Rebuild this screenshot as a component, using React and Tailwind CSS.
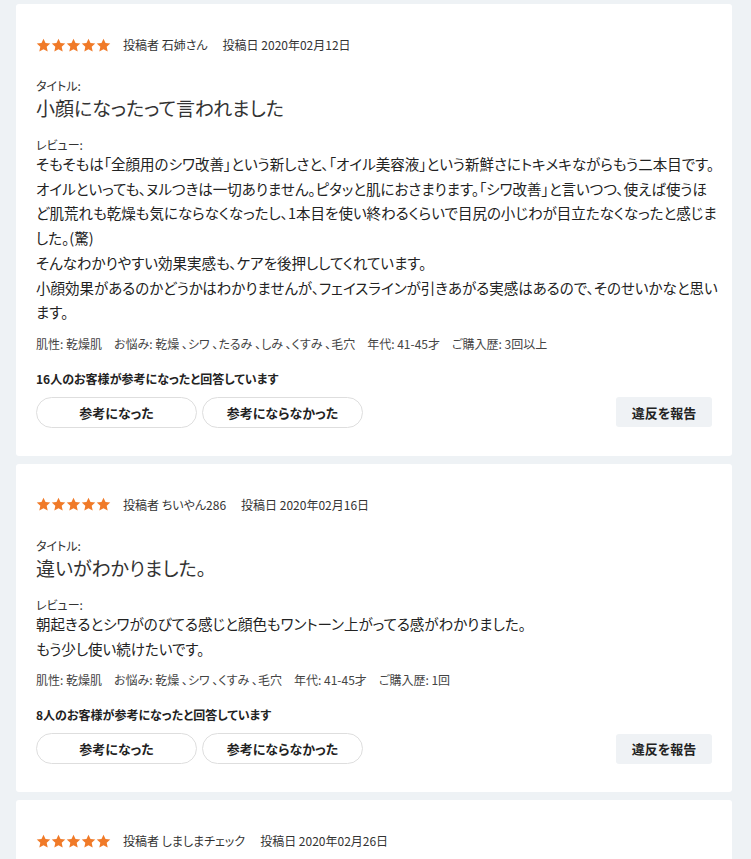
import React from "react";

const font = {
  fontFamily: '"Noto Sans CJK JP", "Noto Sans", sans-serif',
};

function Star() {
  return (
    <svg width="15" height="15" viewBox="0 0 24 24" className="block">
      <path
        d="M12 1l3.2 7.1 7.6.8-5.7 5.2 1.6 7.6L12 17.8l-6.7 3.9 1.6-7.6-5.7-5.2 7.6-.8z"
        fill="#f07a28"
      />
    </svg>
  );
}

function Stars() {
  return (
    <div className="flex">
      <Star />
      <Star />
      <Star />
      <Star />
      <Star />
    </div>
  );
}

function Review({ author, date, title, body, meta, helpful, last }) {
  return (
    <div className="bg-white rounded-[3px] px-5 pt-[28px] pb-7 shrink-0">
      <div className="flex items-center h-[26px]">
        <Stars />
        <span className="ml-[12px] text-[12px] text-[#333]">投稿者 {author}</span>
        <span className="ml-[15px] text-[12px] text-[#333]">投稿日 {date}</span>
      </div>
      {!last && (
        <>
          <div className="mt-[19px] text-[12px] leading-[18px] text-[#333]">タイトル:</div>
          <div className="mt-px text-[19px] leading-[24px] text-[#333]">{title}</div>
          <div className="mt-[16px] text-[12px] leading-[18px] text-[#333]">レビュー:</div>
          <div className="-mt-[2px] text-[14.5px] leading-[24.7px] text-[#222]">
            {body.map((l, i) => (
              <div key={i} className="whitespace-nowrap">{l}</div>
            ))}
          </div>
          <div className="mt-[9px] text-[12px] leading-[20px] text-[#444]">{meta}</div>
          <div className="mt-[15px] text-[12px] leading-[20px] font-bold text-[#222]">{helpful}</div>
          <div className="mt-[8px] flex items-center">
            <button className="w-[161px] h-[31px] rounded-full border border-[#dedede] bg-white text-[13px] font-bold text-[#222]">
              参考になった
            </button>
            <button className="ml-[5px] w-[161px] h-[31px] rounded-full border border-[#dedede] bg-white text-[13px] font-bold text-[#222]">
              参考にならなかった
            </button>
            <button className="ml-auto w-[96px] h-[30px] rounded-[3px] bg-[#eff2f5] text-[13px] font-bold text-[#222]">
              違反を報告
            </button>
          </div>
        </>
      )}
    </div>
  );
}

export default function App() {
  return (
    <div
      className="h-[859px] bg-[#eef2f5] pt-1 pl-4 pr-[19px] flex flex-col gap-[8px] [font-feature-settings:'palt'] overflow-hidden"
      style={font}
    >
      <Review
        author="石姉さん"
        date="2020年02月12日"
        title="小顔になったって言われました"
        body={[
          "そもそもは「全顔用のシワ改善」という新しさと、「オイル美容液」という新鮮さにトキメキながらもう二本目です。",
          "オイルといっても、ヌルつきは一切ありません。ピタッと肌におさまります。「シワ改善」と言いつつ、使えば使うほ",
          "ど肌荒れも乾燥も気にならなくなったし、1本目を使い終わるくらいで目尻の小じわが目立たなくなったと感じま",
          "した。(驚)",
          "そんなわかりやすい効果実感も、ケアを後押ししてくれています。",
          "小顔効果があるのかどうかはわかりませんが、フェイスラインが引きあがる実感はあるので、そのせいかなと思い",
          "ます。",
        ]}
        meta={<>肌性: 乾燥肌　お悩み: 乾燥 、シワ 、たるみ 、しみ 、くすみ 、毛穴　年代: 41-45才　ご購入歴: 3回以上</>}
        helpful="16人のお客様が参考になったと回答しています"
      />
      <Review
        author="ちいやん286"
        date="2020年02月16日"
        title="違いがわかりました。"
        body={[
          "朝起きるとシワがのびてる感じと顔色もワントーン上がってる感がわかりました。",
          "もう少し使い続けたいです。",
        ]}
        meta={<>肌性: 乾燥肌　お悩み: 乾燥 、シワ 、くすみ 、毛穴　年代: 41-45才　ご購入歴: 1回</>}
        helpful="8人のお客様が参考になったと回答しています"
      />
      <Review author="しましまチェック" date="2020年02月26日" last />
    </div>
  );
}
